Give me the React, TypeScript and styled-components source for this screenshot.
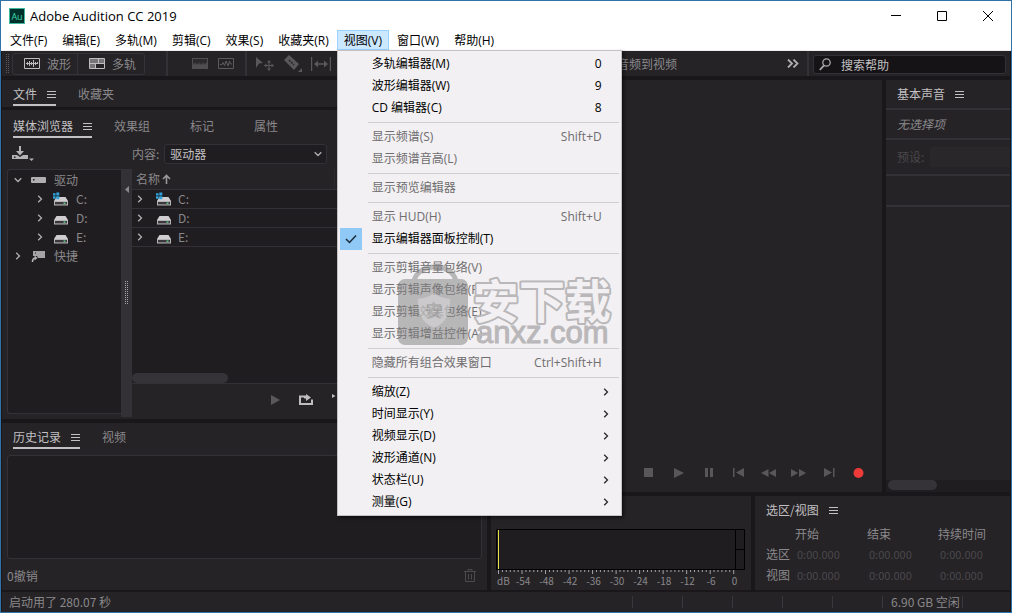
import React from "react";
import styled, { createGlobalStyle, css } from "styled-components";

const c = {
  frame: "#2f73a8",
  gap: "#19171a",
  panel: "#252326",
  well: "#1f1d20",
  line: "#333135",
  text: "#c2c0c2",
  dim: "#8a888b",
  off: "#4a484b",
};

const ui = `"Noto Sans CJK SC", sans-serif`;
const system = `"Open Sans", "Noto Sans CJK SC", sans-serif`;

const Global = createGlobalStyle`
  *, *::before, *::after { box-sizing: border-box; }
  body { margin: 0; background: ${c.gap}; font: 12px/16px ${ui}; color: ${c.dim}; }
  button, input, select { font: inherit; color: inherit; margin: 0; padding: 0; border: 0; background: none; border-radius: 0; }
  button { white-space: nowrap; }
  ul { list-style: none; margin: 0; padding: 0; }
  svg { display: block; flex: none; }
`;

const dots = (color: string) =>
  `conic-gradient(from 270deg at 1px 1px, ${color} 90deg, transparent 0) 0 0 / 2px 2px`;

/* ---------- window frame ---------- */

const Window = styled.div`
  display: flex;
  flex-direction: column;
  min-height: 100vh;
  border: 1px solid ${c.frame};
`;

const TitleBar = styled.header`
  display: flex;
  align-items: center;
  height: 29px;
  padding-left: 8px;
  background: #fff;
  color: #000;
`;

const AppTitle = styled.h1`
  flex: 1;
  margin: 0 0 0 5px;
  font: 13px/18px ${system};
`;

const CaptionButton = styled.button`
  display: grid;
  place-items: center;
  width: 46px;
  height: 29px;
`;

const MenuBar = styled.nav`
  display: flex;
  gap: 1px;
  height: 21px;
  padding-left: 2px;
  background: #fff;
  border-bottom: 1px solid #eeecee;
  font-family: ${system};
  color: #000;
`;

const MenuSlot = styled.div`
  position: relative;
`;

const MenuTitle = styled.button<{ $open?: boolean }>`
  height: 20px;
  padding: 2px 6px 0;
  border: 1px solid ${(p) => (p.$open ? "#99d1ff" : "transparent")};
  background: ${(p) => (p.$open ? "#cce8ff" : "transparent")};
`;

const Popup = styled.div`
  position: absolute;
  z-index: 2;
  top: 20px;
  left: 0;
  width: 285px;
  padding: 2px;
  background: #f2f0f2;
  border: 1px solid #c4c2c4;
  box-shadow: 2px 2px 3px rgba(0, 0, 0, 0.5);
`;

const MenuItem = styled.button`
  display: grid;
  grid-template-columns: 22px 1fr auto;
  align-items: center;
  width: 100%;
  height: 22px;
  padding-right: 17px;
  text-align: left;
  color: #000;
  &:disabled { color: #6f6d6f; }
`;

const ItemLabel = styled.span`
  padding-left: 10px;
`;

const CheckMark = styled.span`
  display: grid;
  place-items: center;
  width: 22px;
  height: 22px;
  background: #90c8f6;
`;

const ArrowSlot = styled.span`
  margin-right: -10px;
`;

const MenuRule = styled.hr`
  height: 1px;
  margin: 3px 0 3px 28px;
  border: 0;
  background: #d0ced0;
`;

const Watermark = styled.svg`
  position: absolute;
  top: 210px;
  left: 58px;
  pointer-events: none;
`;

/* ---------- tool bar ---------- */

const ToolBar = styled.div`
  display: flex;
  align-items: center;
  height: 25px;
  margin: 0 1px;
  background: ${c.panel};
`;

const Grip = styled.span`
  width: 4px;
  height: 20px;
  margin: 0 1px 0 4px;
  background: ${dots("#5a585b")};
`;

const ModeGroup = styled.div`
  display: flex;
  margin-left: 1px;
  border: 1px solid #353337;
  border-radius: 3px;
`;

const ModeButton = styled.button`
  display: flex;
  align-items: center;
  gap: 7px;
  height: 20px;
  padding: 0 6px 0 11px;
  & + & { border-left: 1px solid #353337; padding-right: 8px; }
`;

const Divider = styled.span`
  width: 2px;
  align-self: stretch;
  background: ${c.line};
`;

const ToolGroup = styled.div<{ $inset: number; $gap: number; $end: number }>`
  display: flex;
  align-items: center;
  gap: ${(p) => p.$gap}px;
  padding: 0 ${(p) => p.$end}px 0 ${(p) => p.$inset}px;
`;

const IconButton = styled.button`
  display: grid;
  place-items: center;
`;

const Workspaces = styled.div`
  display: flex;
  align-items: center;
  justify-content: flex-end;
  flex: 1;
  gap: 110px;
  padding-right: 8px;
`;

const Search = styled.label`
  display: flex;
  align-items: center;
  width: 193px;
  height: 19px;
  margin: 2px 4px 0;
  padding-left: 5px;
  gap: 10px;
  background: #151316;
  border: 1px solid ${c.line};
  border-radius: 3px;
  color: ${c.text};
`;

const SearchInput = styled.input`
  flex: 1;
  min-width: 0;
  outline: 0;
  &::placeholder { color: ${c.text}; opacity: 1; }
`;

/* ---------- panels ---------- */

const Workspace = styled.main`
  display: flex;
  flex: 1;
  gap: 4px;
  padding: 4px 1px 2px;
  background: ${c.gap};
`;

const LeftColumn = styled.div`
  display: flex;
  flex-direction: column;
  width: 485px;
`;

const RightArea = styled.div`
  display: flex;
  flex-direction: column;
  flex: 1;
  gap: 4px;
`;

const Row = styled.div<{ $grow?: boolean }>`
  display: flex;
  gap: 4px;
  ${(p) => (p.$grow ? css`flex: 1;` : css`height: 94px;`)}
`;

const Panel = styled.section<{ $w?: number; $h?: number }>`
  display: flex;
  flex-direction: column;
  background: ${c.panel};
  ${(p) => (p.$w ? css`width: ${p.$w}px;` : "")}
  ${(p) => (p.$h ? css`height: ${p.$h}px;` : "")}
`;

const FilePanel = styled(Panel)`
  height: 27px;
`;

const MediaPanel = styled(Panel)`
  flex: 1;
  margin: 3px 0 4px;
  padding-top: 2px;
`;

const GrowPanel = styled(Panel)`
  flex: 1;
`;

const TabBar = styled.div`
  display: flex;
  gap: 22px;
  height: 26px;
  padding-left: 11px;
`;

const TabButton = styled.button<{ $on?: boolean }>`
  display: flex;
  align-items: center;
  gap: 10px;
  padding: 4px ${(p) => (p.$on ? 0 : 18)}px 0 0;
  border-bottom: 2px solid ${(p) => (p.$on ? c.text : "transparent")};
  color: ${(p) => (p.$on ? c.text : c.dim)};
`;

const PanelTitle = styled.h2`
  display: flex;
  align-items: center;
  gap: 10px;
  height: 28px;
  margin: 0;
  padding-left: 11px;
  font-size: 12px;
  font-weight: 400;
  color: ${c.text};
`;

const ContentBar = styled.div`
  display: flex;
  align-items: center;
  height: 31px;
  padding-left: 10px;
`;

const Field = styled.label`
  display: flex;
  align-items: center;
  gap: 5px;
  margin-left: 98px;
`;

const SelectBox = styled.span`
  display: grid;
  align-items: center;
  width: 163px;
  height: 20px;
  background: ${c.well};
  border: 1px solid ${c.line};
  border-radius: 3px;
  & > * { grid-area: 1 / 1; }
  & > svg { justify-self: end; margin-right: 4px; pointer-events: none; }
`;

const Select = styled.select`
  appearance: none;
  width: 100%;
  height: 18px;
  padding-left: 5px;
  color: ${c.text};
  outline: 0;
`;

const Browser = styled.div`
  display: flex;
  flex: 1;
  padding-left: 5px;
`;

const Tree = styled.ul`
  width: 114px;
  margin-bottom: 5px;
  background: ${c.well};
  border: 1px solid ${c.line};
  border-right: 0;
  border-radius: 3px 0 0 3px;
`;

const TreeRow = styled.button<{ $level: number }>`
  display: grid;
  grid-template-columns: 17px 1fr;
  align-items: center;
  width: 100%;
  height: 19px;
  padding-left: ${(p) => (p.$level ? 28 : 6)}px;
  text-align: left;
`;

const WithIcon = styled.span<{ $gap: number }>`
  display: flex;
  align-items: center;
  gap: ${(p) => p.$gap}px;
`;

const Splitter = styled.div`
  display: flex;
  flex-direction: column;
  align-items: center;
  justify-content: space-between;
  width: 11px;
  margin-bottom: 2px;
  padding: 17px 0 112px;
  background: ${c.line};
`;

const SplitGrip = styled.span`
  width: 3px;
  height: 24px;
  background: ${dots("#a5a3a6")};
`;

const Listing = styled.div`
  display: flex;
  flex-direction: column;
  flex: 1;
  margin-right: 5px;
`;

const ListArea = styled.div`
  display: flex;
  flex-direction: column;
  flex: 1;
  background: ${c.well};
  border-bottom: 1px solid ${c.line};
`;

const DriveTable = styled.table`
  width: 100%;
  table-layout: fixed;
  border-collapse: collapse;
  th, td {
    height: 19px;
    padding: 0 0 0 4px;
    border-bottom: 1px solid ${c.line};
    text-align: left;
    font-weight: 400;
  }
  th {
    height: 20px;
    background: ${c.panel};
  }
  th:first-child { width: 202px; border-right: 1px solid #2c2a2d; }
`;

const DriveCell = styled.span`
  display: grid;
  grid-template-columns: 20px 1fr;
  align-items: center;
`;

const Thumb = styled.div<{ $w: number }>`
  width: ${(p) => p.$w}px;
  height: 10px;
  margin-top: auto;
  border-radius: 5px;
  background: #353337;
`;

const PreviewBar = styled.div`
  display: flex;
  align-items: center;
  gap: 18px;
  height: 35px;
  padding: 0 0 3px 138px;
`;

const HistoryList = styled.div`
  flex: 1;
  margin: 6px 5px 0;
  background: ${c.well};
  border: 1px solid ${c.line};
  border-radius: 3px;
`;

const PanelFooter = styled.footer`
  display: flex;
  align-items: center;
  justify-content: space-between;
  height: 31px;
  padding: 2px 11px 0 5px;
`;

/* ---------- editor, sound, levels, selection ---------- */

const Transport = styled.div`
  display: flex;
  justify-content: flex-end;
  margin-top: auto;
  padding: 0 9px 10px 0;
  color: #59575a;
`;

const TransportButton = styled.button`
  display: grid;
  place-items: center;
  width: 30px;
  height: 18px;
`;

const SoundRow = styled.div<{ $h: number }>`
  display: flex;
  align-items: center;
  gap: 7px;
  height: ${(p) => p.$h}px;
  padding-left: 11px;
  border-top: 2px solid ${c.line};
`;

const Preset = styled.label`
  display: flex;
  flex: 1;
  align-items: center;
  gap: 6px;
  color: ${c.off};
`;

const PresetSelect = styled.select`
  appearance: none;
  flex: 1;
  height: 20px;
  min-width: 0;
  background: #2b292c;
  border-radius: 3px 0 0 3px;
`;

const Track = styled.div`
  margin-top: auto;
  padding: 0 2px 1px;
  height: 12px;
  background: ${c.well};
`;

const Meter = styled.svg`
  width: calc(100% - 10px);
  margin: 33px 5px 0;
  font-size: 10px;
`;

const TimeTable = styled.table`
  width: 240px;
  margin: 1px 0 0 11px;
  border-collapse: collapse;
  table-layout: fixed;
  th, td { height: 21px; padding: 0; text-align: left; font-weight: 400; }
  thead th { height: 18px; }
  td { padding-left: 2px; font-size: 11px; color: ${c.off}; }
`;

const Col = styled.col<{ $w: number }>`
  width: ${(p) => p.$w}px;
`;

const StatusBar = styled.footer`
  display: flex;
  align-items: center;
  height: 20px;
  margin: 0 1px;
  padding-left: 7px;
  background: ${c.panel};
`;

const StatusText = styled.span`
  flex: 1;
`;

const StatusCell = styled.span<{ $w: number }>`
  width: ${(p) => p.$w}px;
  height: 12px;
  padding-left: 8px;
  border-left: 1px solid #39373b;
  line-height: 12px;
  white-space: nowrap;
`;

/* ---------- icons ---------- */

const Burger = () => (
  <svg width="9" height="8" fill="none" stroke="currentColor">
    <path d="M0 1.5h9M0 4.5h9M0 7.5h9" />
  </svg>
);

const Chevron = ({ down, color = "#b0aeb1" }: { down?: boolean; color?: string }) => (
  <svg width="8" height="8" viewBox="0 0 8 8" fill="none" stroke={color} strokeWidth="1.3">
    <path d={down ? "M.7 2.2 4 5.500 7.300 2.200" : "M2.200.700 5.500 4 2.200 7.300"} />
  </svg>
);

const Drive = ({ win }: { win?: boolean }) => (
  <svg width="16" height="14" viewBox="0 0 16 14">
    <path d="M3.5 5h9L15 9H1z" fill="#cfcdcf" />
    <path d="M1 9h14v4.5H1z" fill="#b6b4b6" />
    <path d="M2 10h12v2.4H2z" fill="#3a383b" />
    <path d="M10.5 10.5h2v1.4h-2z" fill="#5fd08a" />
    {win && <path d="M0 1.2h2.6v2.4H0zM3.3.5h3v3.1h-3zM0 4.3h2.6v2.4H0zM3.3 4.3h3v3h-3z" fill="#2fa4dc" />}
  </svg>
);

const Volume = () => (
  <svg width="16" height="8">
    <rect y="1" width="15" height="6" rx="1" fill="#b0aeb1" />
    <path d="M2 3h1.5v1.5H2z" fill="#1f1d20" />
  </svg>
);

const Shortcut = () => (
  <svg width="16" height="14" viewBox="0 0 16 14">
    <path d="M2 2h12v7H7L6 7H2z" fill="#a5a3a6" />
    <path d="M4 3.5h1v1H4z" fill="#1f1d20" />
    <path d="M1.5 13c0-3 1-4 3-4" fill="none" stroke="#b5b3b6" strokeWidth="1.6" />
    <path d="M3.6 6.5 6.5 9l-2.9 2.5z" fill="#b5b3b6" />
  </svg>
);

const AppLogo = () => (
  <svg width="16" height="16">
    <rect x=".5" y=".5" width="15" height="15" fill="#00302a" stroke="#3fb8a0" />
    <text x="8" y="11.5" textAnchor="middle" fontSize="9" fontFamily="Open Sans" fill="#3fdcb0">Au</text>
  </svg>
);

const WaveIcon = () => (
  <svg width="16" height="11" fill="none" stroke="#bfbdc0">
    <path d="M.5.5h15v10H.5z" />
    <path d="M2 5.5h12M3.5 4v3M5.5 3v5M7.5 4v3M9.5 2v7M11.5 4v3M13.5 4v2" />
  </svg>
);

const TracksIcon = () => (
  <svg width="16" height="11">
    <path d="M1 1h14v4H1z" fill="#777578" />
    <path d="M1 6h5v4H1z" fill="#777578" />
    <path d="M.5.5h15v10H.5zM.5 5.5h15M9.5.5v5M6.5 5.5v5" fill="none" stroke="#bfbdc0" />
  </svg>
);

const SpectrumIcon = () => (
  <svg width="16" height="11">
    <path d="M0 0h16v11H0z" fill="#504e51" />
    <path d="M1 1h14v4l-1-1v3l-1-2-1 2-1-3-1 3-1-2-1 2-1-3-1 3-1-2-1 2-1-3-1 3-1-2z" fill="#2c2a2d" />
  </svg>
);

const PitchIcon = () => (
  <svg width="16" height="11" fill="none" stroke="#5c5a5d">
    <path d="M.5.5h15v10H.5z" />
    <path d="M2 6.5h2l1-2 1.5 3L8 3l2 5 1.500-5 1 3H14" />
  </svg>
);

const MoveIcon = () => (
  <svg width="19" height="14" viewBox="0 0 19 14" fill="#5a585b">
    <path d="M0 0l7 6-4 .5L0 11z" />
    <path d="M13 4v9M8.5 8.5h9" stroke="#5a585b" />
    <path d="M13 3l2 2.5h-4zM13 14l2-2.5h-4zM8 8.500l2.500-2v4zM18 8.500l-2.500-2v4z" />
  </svg>
);

const RazorIcon = () => (
  <svg width="18" height="17" viewBox="0 0 18 17">
    <path d="M5 0l10 9-5 6L0 5z" fill="#5a585b" />
    <path d="M5 5l5 5" stroke="#252326" strokeWidth="1.5" strokeDasharray="2 1" />
    <path d="M18 13v4h-4z" fill="#5a585b" />
  </svg>
);

const TimeIcon = () => (
  <svg width="20" height="14" viewBox="0 0 20 14" stroke="#5a585b">
    <path d="M.5 0v14M19.5 0v14M4 7h12" strokeWidth="1.4" />
    <path d="M3 7l4-3.5v7zM17 7l-4-3.5v7z" fill="#5a585b" stroke="none" />
  </svg>
);

const ImportIcon = () => (
  <svg width="22" height="16" viewBox="0 0 22 16" fill="#b5b3b6">
    <path d="M0 9h5l3 2 3-2h5v4H0z" />
    <path d="M7 0h2v5h3L8 9.500 4 5h3z" />
    <path d="M2 10.5h1.500V12H2z" fill="#252326" />
    <path d="M17 12.5h5L19.500 15z" />
  </svg>
);

const SearchIcon = () => (
  <svg width="12" height="13" viewBox="0 0 12 13" fill="none" stroke="#a9a7aa">
    <circle cx="7.5" cy="4.5" r="3.7" strokeWidth="1.3" />
    <path d="M5 7.3.8 12" strokeWidth="1.8" />
  </svg>
);

const TrashIcon = () => (
  <svg width="12" height="13" viewBox="0 0 12 13" fill="none" stroke="#4c4a4d">
    <path d="M0 2.500h12M4 2V.5h4V2M1.500 3v9.500h9V3M4.500 5v5.500M7.500 5v5.500" />
  </svg>
);

const LoopIcon = () => (
  <svg width="15" height="12" viewBox="0 0 15 12">
    <path d="M5 2.500H1V10h12V5.500" fill="none" stroke="#bfbdc0" strokeWidth="2" />
    <path d="M5 1.500h2V0l5 3.500L7 7V4.500H5z" fill="#bfbdc0" />
  </svg>
);

const SpeakerIcon = () => (
  <svg width="18" height="12" viewBox="0 0 18 12" fill="#bfbdc0">
    <path d="M0 0l3.500 2L0 4zM5 5h3l5-4v11L8 9H5z" />
  </svg>
);

const transport: [string, React.ReactNode][] = [
  ["停止", <path d="M4 3h9v9H4z" />],
  ["播放", <path d="M4 3l10 5-10 5z" />],
  ["暂停", <path d="M5 3h3v9H5zM10 3h3v9h-3z" />],
  ["上一个", <path d="M3 3h1.5v9H3zM14 3v9L6 7.5z" />],
  ["快退", <path d="M8.5 4v8L1 8zM16 4v8L9 8z" />],
  ["快进", <path d="M1 4v8l7-4zM9 4v8l7-4z" />],
  ["下一个", <path d="M4 3v9l8-4.5zM13 3h1.5v9H13z" />],
  ["录制", <circle cx="8.5" cy="8" r="5" fill="#ec3b39" />],
];

/* ---------- data ---------- */

type Item = { label: string; keys?: string; off?: boolean; checked?: boolean; sub?: boolean } | null;

const viewMenu: Item[] = [
  { label: "多轨编辑器(M)", keys: "0" },
  { label: "波形编辑器(W)", keys: "9" },
  { label: "CD 编辑器(C)", keys: "8" },
  null,
  { label: "显示频谱(S)", keys: "Shift+D", off: true },
  { label: "显示频谱音高(L)", off: true },
  null,
  { label: "显示预览编辑器", off: true },
  null,
  { label: "显示 HUD(H)", keys: "Shift+U", off: true },
  { label: "显示编辑器面板控制(T)", checked: true },
  null,
  { label: "显示剪辑音量包络(V)", off: true },
  { label: "显示剪辑声像包络(P)", off: true },
  { label: "显示剪辑效果包络(E)", off: true },
  { label: "显示剪辑增益控件(A)", off: true },
  null,
  { label: "隐藏所有组合效果窗口", keys: "Ctrl+Shift+H", off: true },
  null,
  { label: "缩放(Z)", sub: true },
  { label: "时间显示(Y)", sub: true },
  { label: "视频显示(D)", sub: true },
  { label: "波形通道(N)", sub: true },
  { label: "状态栏(U)", sub: true },
  { label: "测量(G)", sub: true },
];

const menus = ["文件(F)", "编辑(E)", "多轨(M)", "剪辑(C)", "效果(S)", "收藏夹(R)", "视图(V)", "窗口(W)", "帮助(H)"];
const drives = ["C:", "D:", "E:"];
const levels = ["-54", "-48", "-42", "-36", "-30", "-24", "-18", "-12", "-6", "0"];

/* ---------- parts ---------- */

const Tabs = ({ names }: { names: string[] }) => (
  <TabBar role="tablist">
    {names.map((name, i) => (
      <TabButton key={name} role="tab" aria-selected={i === 0} $on={i === 0}>
        {name}
        {i === 0 && <Burger />}
      </TabButton>
    ))}
  </TabBar>
);

const Brand = () => (
  <Watermark width="224" height="96" viewBox="0 0 224 96" fill="#808080" aria-hidden="true">
    <g opacity=".5">
      <path d="M18 21C20 1 58 1 60 21" fill="none" stroke="#808080" strokeWidth="5" />
      <rect x="2" y="18" width="70" height="66" rx="7" />
    </g>
    <path d="M38 32c5 4 10 5 16 6 0 14-3 23-16 29-13-6-16-15-16-29 6-1 11-2 16-6z" fill="#dedcde" opacity=".5" />
    <text x="38" y="56" fontSize="17" fontWeight="700" textAnchor="middle" opacity=".35">安</text>
    <text
      x="77"
      y="57"
      fontSize="46"
      fontWeight="700"
      fontFamily="Noto Sans CJK SC"
      fill="#f2f0f2"
      stroke="#b9b7b9"
      strokeWidth="4"
      strokeLinejoin="round"
      paintOrder="stroke"
    >
      安下载
    </text>
    <text x="80" y="82" fontSize="31" fontFamily="Liberation Sans" fill="#b9b7b9" stroke="#b9b7b9">
      anxz.com
    </text>
  </Watermark>
);

const ViewMenu = () => (
  <Popup role="menu" aria-label="视图">
    {viewMenu.map((item, i) =>
      item ? (
        <MenuItem
          key={item.label}
          role={item.checked ? "menuitemcheckbox" : "menuitem"}
          aria-checked={item.checked}
          aria-haspopup={item.sub ? "menu" : undefined}
          disabled={item.off}
        >
          {item.checked ? (
            <CheckMark>
              <svg width="12" height="10" fill="none" stroke="#1a2a3a" strokeWidth="1.5">
                <path d="M1 5l3.500 3.500L11 1.500" />
              </svg>
            </CheckMark>
          ) : (
            <span />
          )}
          <ItemLabel>{item.label}</ItemLabel>
          {item.keys && <span>{item.keys}</span>}
          {item.sub && (
            <ArrowSlot>
              <Chevron color="#2a282b" />
            </ArrowSlot>
          )}
        </MenuItem>
      ) : (
        <MenuRule key={i} />
      )
    )}
    <Brand />
  </Popup>
);

const LevelMeter = () => (
  <Meter viewBox="0 0 250 60" role="img" aria-label="电平">
    <path d="M.5.5h248v40H.5z" fill={c.well} stroke="#000" />
    <path d="M239.5.5v40M239.5 20.5h9" stroke="#000" />
    <path d="M2.5 1v39" stroke="#e8e04a" />
    {Array.from({ length: 61 }, (_, i) => {
      const x = 2.5 + i * 3.92;
      return <path key={i} d={`M${x} 41v${i % 6 === 0 ? 4 : 2}`} stroke="#a5a3a6" />;
    })}
    <text x="1" y="56" fill={c.dim}>dB</text>
    {levels.map((v, i) => (
      <text key={v} x={27 + i * 23.5} y="56" textAnchor="middle" fill={c.dim}>
        {v}
      </text>
    ))}
  </Meter>
);

export default function App() {
  return (
    <>
      <Global />
      <Window>
        <TitleBar>
          <AppLogo />
          <AppTitle>Adobe Audition CC 2019</AppTitle>
          <CaptionButton aria-label="最小化">
            <svg width="10" height="10" stroke="#000"><path d="M0 4.5h10" /></svg>
          </CaptionButton>
          <CaptionButton aria-label="最大化">
            <svg width="10" height="10" stroke="#000" fill="none"><path d="M.5.5h9v9h-9z" /></svg>
          </CaptionButton>
          <CaptionButton aria-label="关闭">
            <svg width="10" height="10" stroke="#000"><path d="M0 0l10 10M10 0 0 10" /></svg>
          </CaptionButton>
        </TitleBar>

        <MenuBar>
          {menus.map((name) => {
            const open = name === "视图(V)";
            return (
              <MenuSlot key={name}>
                <MenuTitle $open={open} aria-haspopup="menu" aria-expanded={open}>{name}</MenuTitle>
                {open && <ViewMenu />}
              </MenuSlot>
            );
          })}
        </MenuBar>

        <ToolBar>
          <Grip />
          <ModeGroup>
            <ModeButton><WaveIcon />波形</ModeButton>
            <ModeButton><TracksIcon />多轨</ModeButton>
          </ModeGroup>
          <ToolGroup $inset={21} $gap={0} $end={0} />
          <Divider />
          <ToolGroup $inset={24} $gap={10} $end={11}>
            <IconButton aria-label="频谱频率"><SpectrumIcon /></IconButton>
            <IconButton aria-label="频谱音高"><PitchIcon /></IconButton>
          </ToolGroup>
          <Divider />
          <ToolGroup $inset={9} $gap={9} $end={8}>
            <IconButton aria-label="移动工具"><MoveIcon /></IconButton>
            <IconButton aria-label="切断工具"><RazorIcon /></IconButton>
            <IconButton aria-label="时间选择"><TimeIcon /></IconButton>
          </ToolGroup>
          <Workspaces>
            <button>音频到视频</button>
            <IconButton aria-label="更多">
              <svg width="12" height="9" viewBox="0 0 12 9" fill="none" stroke="#b0aeb1" strokeWidth="1.8">
                <path d="M1 .5l4 4-4 4M6.5.5l4 4-4 4" />
              </svg>
            </IconButton>
          </Workspaces>
          <Divider />
          <Search>
            <SearchIcon />
            <SearchInput type="search" placeholder="搜索帮助" aria-label="搜索帮助" />
          </Search>
        </ToolBar>

        <Workspace>
          <LeftColumn>
            <FilePanel>
              <Tabs names={["文件", "收藏夹"]} />
            </FilePanel>
            <MediaPanel>
              <Tabs names={["媒体浏览器", "效果组", "标记", "属性"]} />
              <ContentBar>
                <IconButton aria-label="导入"><ImportIcon /></IconButton>
                <Field>
                  内容:
                  <SelectBox>
                    <Select defaultValue="驱动器">
                      <option>驱动器</option>
                    </Select>
                    <Chevron down />
                  </SelectBox>
                </Field>
              </ContentBar>
              <Browser>
                <Tree>
                  <li>
                    <TreeRow $level={0}>
                      <Chevron down />
                      <WithIcon $gap={7}><Volume />驱动</WithIcon>
                    </TreeRow>
                    <ul>
                      {drives.map((d) => (
                        <li key={d}>
                          <TreeRow $level={1}>
                            <Chevron />
                            <WithIcon $gap={7}><Drive win={d === "C:"} />{d}</WithIcon>
                          </TreeRow>
                        </li>
                      ))}
                    </ul>
                  </li>
                  <li>
                    <TreeRow $level={0}>
                      <Chevron />
                      <WithIcon $gap={7}><Shortcut />快捷</WithIcon>
                    </TreeRow>
                  </li>
                </Tree>
                <Splitter>
                  <svg width="4" height="7" fill="#8a888b"><path d="M4 0v7L0 3.500z" /></svg>
                  <SplitGrip />
                </Splitter>
                <Listing>
                  <ListArea>
                    <DriveTable>
                      <thead>
                        <tr>
                          <th>
                            <WithIcon $gap={2}>
                              名称
                              <svg width="9" height="10" viewBox="0 0 9 10" fill="none" stroke="#9a989b" strokeWidth="1.6">
                                <path d="M4.5 10V1.5M1 5l3.500-3.500L8 5" />
                              </svg>
                            </WithIcon>
                          </th>
                          <th aria-label="时长" />
                        </tr>
                      </thead>
                      <tbody>
                        {drives.map((d) => (
                          <tr key={d}>
                            <td>
                              <DriveCell>
                                <Chevron />
                                <WithIcon $gap={6}><Drive win={d === "C:"} />{d}</WithIcon>
                              </DriveCell>
                            </td>
                            <td />
                          </tr>
                        ))}
                      </tbody>
                    </DriveTable>
                    <Thumb $w={96} />
                  </ListArea>
                  <PreviewBar>
                    <IconButton aria-label="播放">
                      <svg width="11" height="10" fill="#5a585b"><path d="M1 0l9 5-9 5z" /></svg>
                    </IconButton>
                    <IconButton aria-label="循环"><LoopIcon /></IconButton>
                    <IconButton aria-label="自动播放"><SpeakerIcon /></IconButton>
                  </PreviewBar>
                </Listing>
              </Browser>
            </MediaPanel>
            <Panel $h={167}>
              <Tabs names={["历史记录", "视频"]} />
              <HistoryList />
              <PanelFooter>
                0撤销
                <IconButton aria-label="删除"><TrashIcon /></IconButton>
              </PanelFooter>
            </Panel>
          </LeftColumn>

          <RightArea>
            <Row $grow>
              <GrowPanel>
                <Transport>
                  {transport.map(([name, shape]) => (
                    <TransportButton key={name} aria-label={name}>
                      <svg width="17" height="16" fill="currentColor">{shape}</svg>
                    </TransportButton>
                  ))}
                </Transport>
              </GrowPanel>
              <Panel $w={124}>
                <PanelTitle>基本声音<Burger /></PanelTitle>
                <SoundRow $h={30}><em>无选择项</em></SoundRow>
                <SoundRow $h={36}>
                  <Preset>预设:<PresetSelect disabled /></Preset>
                </SoundRow>
                <SoundRow $h={31} />
                <SoundRow $h={31} />
                <Track><Thumb $w={49} /></Track>
              </Panel>
            </Row>
            <Row>
              <GrowPanel>
                <LevelMeter />
              </GrowPanel>
              <Panel $w={255}>
                <PanelTitle>选区/视图<Burger /></PanelTitle>
                <TimeTable>
                  <colgroup>
                    <Col $w={29} />
                    <Col $w={72} />
                    <Col $w={71} />
                    <Col $w={68} />
                  </colgroup>
                  <thead>
                    <tr><th aria-label="范围" /><th>开始</th><th>结束</th><th>持续时间</th></tr>
                  </thead>
                  <tbody>
                    {["选区", "视图"].map((name) => (
                      <tr key={name}>
                        <th scope="row">{name}</th>
                        <td>0:00.000</td>
                        <td>0:00.000</td>
                        <td>0:00.000</td>
                      </tr>
                    ))}
                  </tbody>
                </TimeTable>
              </Panel>
            </Row>
          </RightArea>
        </Workspace>

        <StatusBar>
          <StatusText>启动用了 280.07 秒</StatusText>
          {[0, 1, 2, 3, 4].map((n) => (
            <StatusCell key={n} $w={50} />
          ))}
          <StatusCell $w={80}>6.90 GB 空闲</StatusCell>
          <StatusCell $w={48} />
        </StatusBar>
      </Window>
    </>
  );
}
